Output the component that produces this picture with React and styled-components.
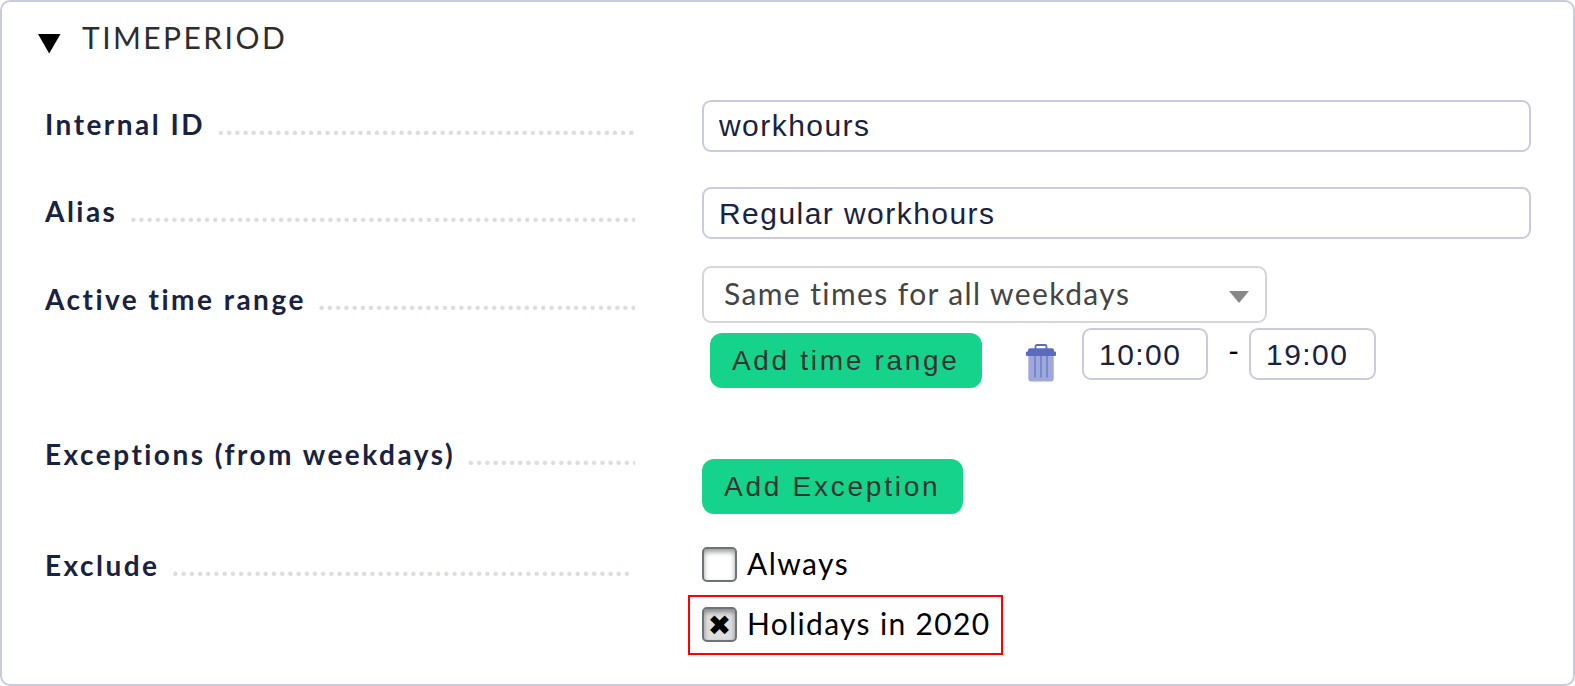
import React, { useState } from 'react';
import styled, { createGlobalStyle } from 'styled-components';

const sans = '"Liberation Sans", Arial, sans-serif';

const GlobalStyle = createGlobalStyle`
  *, *::before, *::after { box-sizing: border-box; }
  body {
    margin: 0;
    background: #fff;
    color: #000;
    font-family: Lato, sans-serif;
    font-size: 30px;
    letter-spacing: 1.4px;
  }
`;

const Panel = styled.section`
  height: 686px;
  border: 2px solid #cacbdc;
  border-radius: 10px;
  background: #fff;
  padding: 15px 41px 0 36px;
`;

const Header = styled.header`
  display: flex;
  align-items: flex-start;
  height: 83px;
`;

const Title = styled.h1`
  margin: 0 0 0 21px;
  font-size: 30px;
  font-weight: 400;
  line-height: 40px;
  letter-spacing: 2.45px;
  color: #2d2d2d;
`;

const CollapseArrow = styled.svg`
  display: block;
  width: 23px;
  height: 20px;
  margin-top: 17px;
`;

const Row = styled.div`
  display: grid;
  grid-template-columns: 590px 1fr;
  column-gap: 67px;
  align-items: start;
  height: ${(p) => p.$height}px;
  padding-left: 7px;
`;

const Label = styled.div`
  display: flex;
  margin-top: ${(p) => p.$offset || 0}px;
  height: 36px;
  font-size: 28px;
  font-weight: 700;
  line-height: 36px;
  letter-spacing: 2.48px;
  color: #19233f;
  white-space: nowrap;
`;

const Dots = styled.span`
  flex: 1;
  min-width: 0;
  margin-left: 12.5px;
  overflow: hidden;
  color: #ddd;
  letter-spacing: 1.56px;
`;

const Field = styled.div`
  min-width: 0;
  padding-top: ${(p) => p.$offset || 0}px;
`;

const Input = styled.input`
  display: block;
  flex: none;
  width: ${(p) => p.$width || '829px'};
  height: 52px;
  margin: 0;
  padding: ${(p) => p.$drop || 0}px 15px 0;
  border: 2px solid #cacbdc;
  border-radius: 9px;
  background: #fff;
  outline: none;
  font: 30px ${sans};
  letter-spacing: 1.45px;
  color: #19233f;
`;

const Select = styled.button`
  display: flex;
  align-items: flex-start;
  justify-content: space-between;
  width: 565px;
  height: 57px;
  margin: 0;
  padding: 0 16px 0 20px;
  border: 2px solid #d6d6d6;
  border-radius: 9px;
  background: #fff;
  font: 30px Lato, sans-serif;
  line-height: 51px;
  letter-spacing: 1.4px;
  color: #444;
`;

const SelectArrow = styled.svg`
  display: block;
  width: 20px;
  height: 12px;
  margin-top: 23px;
`;

const TimeRange = styled.div`
  display: flex;
  align-items: flex-start;
  padding: 5px 0 0 8px;
`;

const ActionButton = styled.button`
  display: block;
  flex: none;
  width: ${(p) => p.$width}px;
  height: 55px;
  margin: ${(p) => p.$offset || 0}px 0 0;
  padding: 0 0 0 22px;
  border: 0;
  border-radius: 12px;
  background: #15d38a;
  font: 28px ${sans};
  line-height: 55px;
  letter-spacing: ${(p) => p.$spacing}px;
  text-align: left;
  white-space: nowrap;
  color: #333;
`;

const Trash = styled.svg`
  display: block;
  flex: none;
  width: 30px;
  height: 38px;
  margin: 16px 26px 0 44px;
`;

const Dash = styled.span`
  width: 41px;
  padding-left: 20px;
  line-height: 45px;
`;

const Option = styled.label`
  display: flex;
  align-items: flex-start;
  width: max-content;
  height: 35px;
  line-height: 32px;
  letter-spacing: ${(p) => p.$spacing}px;
`;

const Highlight = styled.div`
  width: 315px;
  height: 60px;
  margin: 13px 0 0 -14px;
  padding: 10px 12px;
  border: 2px solid #f00;
`;

const Checkbox = styled.span`
  display: flex;
  align-items: center;
  justify-content: center;
  width: 35px;
  height: 35px;
  margin-right: 10px;
  border: 2px solid #6f7378;
  border-radius: 5px;
  background: ${(p) => (p.$checked ? '#dedede' : '#fff')};
  box-shadow: inset 0 3px 5px rgba(0, 0, 0, 0.4);
  font: 28px "DejaVu Sans", sans-serif;
  line-height: 31px;
  letter-spacing: 0;
`;

const CheckMark = styled.span`
  padding-top: 2px;
`;

const HiddenCheck = styled.input`
  position: absolute;
  opacity: 0;
  pointer-events: none;
`;

function FieldLabel({ children, offset, dots }) {
  return (
    <Label $offset={offset}>
      {children}
      <Dots aria-hidden="true">{'.'.repeat(dots)}</Dots>
    </Label>
  );
}

function CheckOption({ children, spacing, initial = false }) {
  const [checked, setChecked] = useState(initial);
  return (
    <Option $spacing={spacing}>
      <HiddenCheck type="checkbox" checked={checked} onChange={() => setChecked(!checked)} />
      <Checkbox $checked={checked}>{checked && <CheckMark>✖</CheckMark>}</Checkbox>
      {children}
    </Option>
  );
}

function TrashIcon() {
  return (
    <Trash viewBox="0 0 30 38">
      <path d="M2.300 11h25.400v23.500a3 3 0 0 1-3 3H5.300a3 3 0 0 1-3-3z" fill="#9fa8da" />
      <path d="M9 11v22.500M15 11v22.500M21 11v22.500" stroke="#7986cb" strokeWidth="2" />
      <path d="M9.500 5V2.500a1.500 1.500 0 0 1 1.500-1.500h8a1.500 1.500 0 0 1 1.500 1.500V5" fill="none" stroke="#5c6bc0" strokeWidth="1.800" />
      <path d="M4 4.300h22a2 2 0 0 1 2 2V7.500h1a1 1 0 0 1 1 1v2.500a1 1 0 0 1-1 1H1a1 1 0 0 1-1-1V8.500a1 1 0 0 1 1-1h1V6.300a2 2 0 0 1 2-2z" fill="#5c6bc0" />
    </Trash>
  );
}

export default function App() {
  return (
    <>
      <GlobalStyle />
      <Panel>
        <Header>
          <CollapseArrow viewBox="0 0 23 20">
            <path d="M0 0h22.500L11.200 19.500z" fill="#000" />
          </CollapseArrow>
          <Title>TIMEPERIOD</Title>
        </Header>
        <Row $height={87}>
          <FieldLabel offset={6} dots={51}>Internal ID</FieldLabel>
          <Input defaultValue="workhours" spellCheck={false} />
        </Row>
        <Row $height={79}>
          <FieldLabel offset={6} dots={62}>Alias</FieldLabel>
          <Input $drop={2} defaultValue="Regular workhours" spellCheck={false} />
        </Row>
        <Row $height={170}>
          <FieldLabel offset={15} dots={39}>Active time range</FieldLabel>
          <Field>
            <Select type="button">
              Same times for all weekdays
              <SelectArrow viewBox="0 0 20 12">
                <path d="M0 0h20L10 12z" fill="#888" />
              </SelectArrow>
            </Select>
            <TimeRange>
              <ActionButton type="button" $width={272} $offset={5} $spacing={2.68}>Add time range</ActionButton>
              <TrashIcon />
              <Input $width="126px" $drop={2} defaultValue="10:00" />
              <Dash>-</Dash>
              <Input $width="127px" $drop={2} defaultValue="19:00" />
            </TimeRange>
          </Field>
        </Row>
        <Row $height={111}>
          <FieldLabel dots={21}>Exceptions (from weekdays)</FieldLabel>
          <Field $offset={23}>
            <ActionButton type="button" $width={261} $spacing={2.75}>Add Exception</ActionButton>
          </Field>
        </Row>
        <Row $height={120}>
          <FieldLabel dots={56}>Exclude</FieldLabel>
          <Field>
            <CheckOption spacing={1.45}>Always</CheckOption>
            <Highlight>
              <CheckOption spacing={1.33} initial>Holidays in 2020</CheckOption>
            </Highlight>
          </Field>
        </Row>
      </Panel>
    </>
  );
}
